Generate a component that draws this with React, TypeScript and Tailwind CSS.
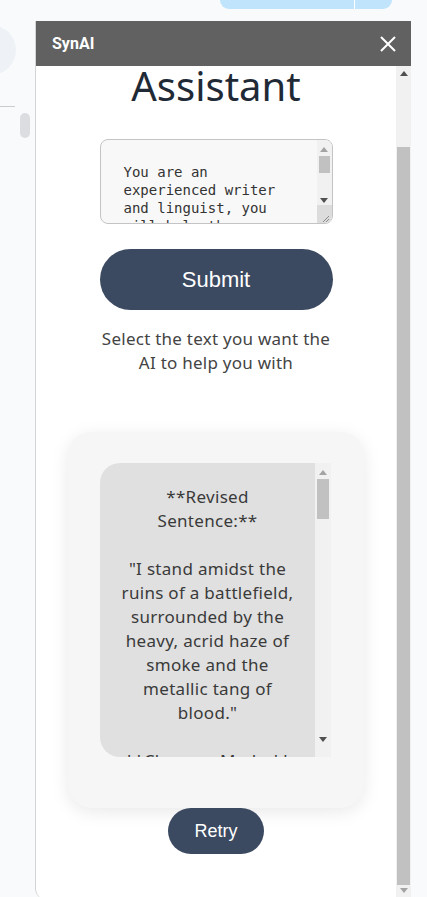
import React, { useEffect, useRef } from 'react';

const PROMPT =
  'You are an experienced writer and linguist, you will help the user rewrite and improve the text they select.';

const REPLY = `**Revised Sentence:**

"I stand amidst the ruins of a battlefield, surrounded by the heavy, acrid haze of smoke and the metallic tang of blood."

**Changes Made:**

1. Replaced "standing" with "I stand" to make the sentence active.
2. Added "acrid" to describe the smoke.`;

const bodyFont = { fontFamily: '"Noto Sans", sans-serif' };
const btnFont = { fontFamily: '"Liberation Sans", Arial, sans-serif' };

const CloseIcon: React.FC = () => (
  <svg width="16" height="16" viewBox="0 0 16 16" fill="none" stroke="white" strokeWidth="2">
    <path d="M1 1L15 15M15 1L1 15" />
  </svg>
);

// little arrow of the classic scrollbar
const Arrow: React.FC<{ up?: boolean; dim?: boolean }> = ({ up, dim }) => (
  <svg width="8" height="5" viewBox="0 0 8 5" className="shrink-0">
    <path d={up ? 'M0 5L4 0L8 5Z' : 'M0 0L8 0L4 5Z'} fill={dim ? '#a3a3a3' : '#505050'} />
  </svg>
);

const App: React.FC = () => {
  const bodyRef = useRef<HTMLDivElement>(null);

  useEffect(() => {
    // the panel is scrolled all the way down in the shot
    if (bodyRef.current) bodyRef.current.scrollTop = bodyRef.current.scrollHeight;
  }, []);

  return (
    <div className="relative h-[897px] overflow-hidden bg-[#f8fafc]" style={bodyFont}>
      {/* page behind the widget */}
      <div className="flex">
        <div className="flex w-[16px] flex-col pt-[25px]">
          <div className="-ml-[34px] h-[50px] w-[50px] rounded-full bg-[#eef2f6]" />
          <div className="mt-[31px] h-px w-[15px] bg-[#c9cbcf]" />
          <div className="ml-[20px] mt-[6px] h-[25px] w-[10px] shrink-0 rounded-full bg-[#dcdde1]" />
        </div>
        <div className="ml-[204px] flex h-[9px] w-[172px] rounded-b-[18px] bg-[#c0e4fb]">
          <div className="ml-[134px] h-full w-px bg-white" />
        </div>
      </div>

      {/* SynAI side panel */}
      <div className="absolute left-[35px] top-[21px] flex h-[879px] w-[376px] flex-col rounded-b-[12px] border-l border-[#d4d4d4] bg-white">
        <div className="flex h-[45px] shrink-0 items-center justify-between bg-[#616161] pl-[16px] pr-[15px]">
          <span className="text-[16px] font-bold text-white" style={{ fontFamily: 'Roboto, sans-serif' }}>
            SynAI
          </span>
          <CloseIcon />
        </div>

        <div className="flex min-h-0 flex-1">
          <div ref={bodyRef} className="flex-1 overflow-hidden rounded-bl-[12px]">
            <div className="flex flex-col items-center pb-[46px] pt-[70px]">
              <h1 className="text-[40px] leading-[48px] text-[#1f2a36]">Assistant</h1>

              <div className="mt-[29px] flex h-[85px] w-[233px] overflow-hidden rounded-[8px] border border-[#c4c4c4] bg-[#f8f8f8]">
                <textarea
                  readOnly
                  value={PROMPT}
                  className="h-full flex-1 resize-none overflow-hidden bg-transparent pl-[23px] pr-[8px] pt-[23px] text-[14px] leading-[18px] text-[#333] outline-none"
                  style={{ fontFamily: '"DejaVu Sans Mono", monospace' }}
                />
                <div className="flex w-[15px] flex-col bg-[#f1f1f1]">
                  <div className="flex h-[16px] items-center justify-center pt-[3px]">
                    <Arrow up dim />
                  </div>
                  <div className="mx-[2px] h-[17px] bg-[#c1c1c1]" />
                  <div className="flex flex-1 items-center justify-center pt-[22px]">
                    <Arrow />
                  </div>
                  <div className="relative h-[18px] bg-[#dcdcdc]">
                    <svg width="15" height="18" viewBox="0 0 15 18" className="absolute inset-0">
                      <path d="M12 11L6 17M12 14L9 17" stroke="#8a8a8a" strokeWidth="1" />
                    </svg>
                  </div>
                </div>
              </div>

              <button type="button" className="mt-[25px] h-[61px] w-[233px] rounded-full bg-[#3b4a61] text-[22px] text-white" style={btnFont}>
                Submit
              </button>

              <p className="mt-[17px] w-[236px] text-center text-[17px] leading-[24px] tracking-[0.25px] text-[#444]">
                Select the text you want the AI to help you with
              </p>

              <div className="mt-[57px] h-[376px] w-[296px] rounded-[24px] bg-[#f6f6f6] pl-[32px] pt-[31px] shadow-[0_4px_18px_rgba(0,0,0,0.09)]">
                <div className="flex h-[294px] w-[231px]">
                  <div className="flex-1 overflow-hidden rounded-l-[20px] bg-[#e0e0e0] px-[19px] pt-[22px]">
                    <p className="whitespace-pre-wrap text-center text-[17px] leading-[24px] tracking-[0.3px] text-[#3a3a3a]">{REPLY}</p>
                  </div>
                  <div className="flex w-[16px] flex-col bg-[#f1f1f1]">
                    <div className="flex h-[16px] items-center justify-center pt-[2px]">
                      <Arrow up dim />
                    </div>
                    <div className="mx-[2px] h-[40px] bg-[#c1c1c1]" />
                    <div className="flex-1" />
                    <div className="flex h-[20px] items-start justify-center">
                      <Arrow />
                    </div>
                  </div>
                </div>
              </div>

              <button type="button" className="h-[46px] w-[96px] rounded-full bg-[#3b4a61] text-[18px] text-white" style={btnFont}>
                Retry
              </button>
            </div>
          </div>

          {/* outer scrollbar */}
          <div className="flex w-[15px] flex-col bg-[#f1f1f1]">
            <div className="flex h-[15px] items-center justify-center">
              <Arrow up />
            </div>
            <div className="mx-px mt-[66px] h-[738px] bg-[#c1c1c1]" />
            <div className="flex flex-1 items-start justify-center pt-[3px]">
              <Arrow dim />
            </div>
          </div>
        </div>
      </div>
    </div>
  );
};

export default App;
